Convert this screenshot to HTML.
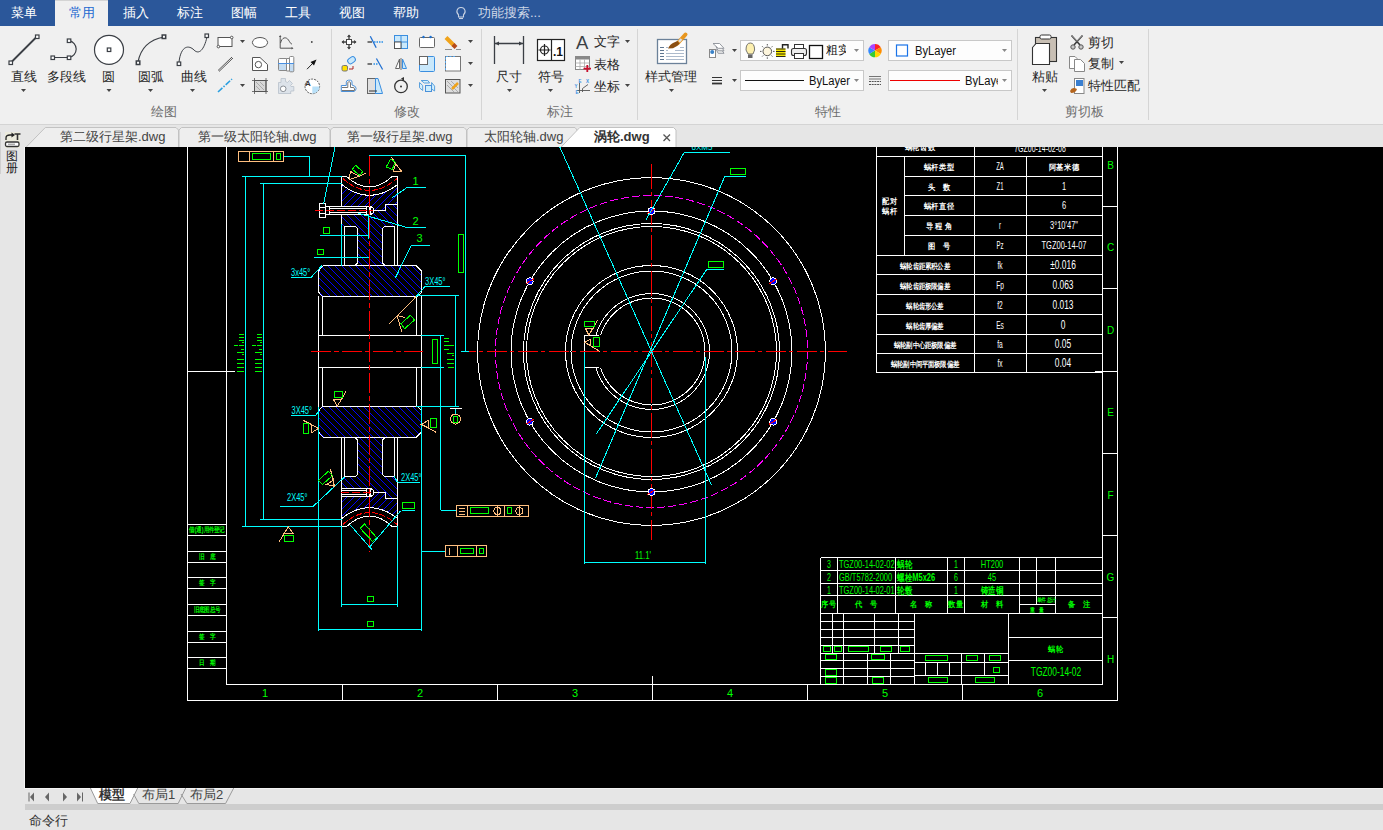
<!DOCTYPE html>
<html><head><meta charset="utf-8">
<style>
*{margin:0;padding:0;box-sizing:border-box}
html,body{width:1383px;height:830px;overflow:hidden;background:#f0f0f0;font-family:"Liberation Sans",sans-serif;position:relative}
.a{position:absolute;white-space:nowrap;line-height:1}
#menubar{position:absolute;left:0;top:0;width:1383px;height:26px;background:#2b579a}
.mt{position:absolute;top:4.5px;font-size:13px;color:#fff;line-height:16px}
#acttab{position:absolute;left:55px;top:0;width:53px;height:26px;background:#f0f0f0;border-top:1px solid #d4d4d4}
#ribbon{position:absolute;left:0;top:26px;width:1383px;height:98px;background:#f0f0f0}
.rt{position:absolute;font-size:13px;color:#262626;line-height:16px}
.gl{position:absolute;top:104px;font-size:13px;color:#6d6d6d;line-height:16px}
.sep{position:absolute;top:29px;width:1px;height:91px;background:#d5d5d5}
#tabbar{position:absolute;left:0;top:124px;width:1383px;height:23px;background:#e6e6e6}
.dt{position:absolute;top:129px;font-size:13px;color:#444;line-height:16px}
#side{position:absolute;left:0;top:147px;width:25px;height:663px;background:#e6e6e6}
#canvas{position:absolute;left:25px;top:147px;width:1358px;height:641px;background:#000;overflow:hidden}
#laybar{position:absolute;left:24px;top:788px;width:1359px;height:16px;background:#e6e6e6;border-top:1px solid #f2f2f2}
#graybar{position:absolute;left:25px;top:804px;width:1358px;height:6px;background:#cdcdcd}
#cmd{position:absolute;left:0;top:810px;width:1383px;height:20px;background:#e6e6e6}
</style></head><body>
<div id="menubar"></div>
<div id="acttab"></div>
<div class="mt" style="left:11px">菜单</div>
<div class="mt" style="left:69px;color:#2369d0">常用</div>
<div class="mt" style="left:123px">插入</div>
<div class="mt" style="left:177px">标注</div>
<div class="mt" style="left:231px">图幅</div>
<div class="mt" style="left:285px">工具</div>
<div class="mt" style="left:339px">视图</div>
<div class="mt" style="left:393px">帮助</div>
<div class="mt" style="left:478px;color:#d0d9e8">功能搜索...</div>

<div id="ribbon"></div>
<div class="sep" style="left:331px"></div>
<div class="sep" style="left:481px"></div>
<div class="sep" style="left:637px"></div>
<div class="sep" style="left:1017px"></div>
<div class="sep" style="left:1148px"></div>
<div class="rt" style="left:11px;top:69px">直线</div>
<div class="rt" style="left:47px;top:69px">多段线</div>
<div class="rt" style="left:102px;top:69px">圆</div>
<div class="rt" style="left:138px;top:69px">圆弧</div>
<div class="rt" style="left:181px;top:69px">曲线</div>
<div class="gl" style="left:151px">绘图</div>
<div class="gl" style="left:394px">修改</div>
<div class="rt" style="left:496px;top:69px">尺寸</div>
<div class="rt" style="left:538px;top:69px">符号</div>
<div class="rt" style="left:594px;top:34px">文字</div>
<div class="rt" style="left:594px;top:57px">表格</div>
<div class="rt" style="left:594px;top:79px">坐标</div>
<div class="gl" style="left:547px">标注</div>
<div class="rt" style="left:645px;top:69px">样式管理</div>
<div class="gl" style="left:815px">特性</div>
<div class="rt" style="left:1032px;top:69px">粘贴</div>
<div class="rt" style="left:1088px;top:35px">剪切</div>
<div class="rt" style="left:1088px;top:56px">复制</div>
<div class="rt" style="left:1088px;top:78px">特性匹配</div>
<div class="gl" style="left:1065px">剪切板</div>

<svg class="a" style="left:0;top:0" width="1383" height="124" viewBox="0 0 1383 124">
<g fill="#444">
<path d="M21 89h5l-2.5 3z"/><path d="M106.5 89h5l-2.5 3z"/><path d="M148 89h5l-2.5 3z"/><path d="M190 89h5l-2.5 3z"/>
<path d="M240 40h5l-2.5 3z"/><path d="M240 84h5l-2.5 3z"/>
<path d="M468 40h5l-2.5 3z"/><path d="M468 62h5l-2.5 3z"/><path d="M468 84h5l-2.5 3z"/>
<path d="M507 89h5l-2.5 3z"/><path d="M548 89h5l-2.5 3z"/><path d="M625 40h5l-2.5 3z"/><path d="M625 84h5l-2.5 3z"/>
<path d="M669 89h5l-2.5 3z"/><path d="M732 49h5l-2.5 3z"/><path d="M732 79h5l-2.5 3z"/>
<path d="M1042 89h5l-2.5 3z"/><path d="M1119 61h5l-2.5 3z"/>
</g>
<!-- draw group big icons -->
<g stroke="#3b3f45" fill="#fff">
<line x1="11" y1="62.5" x2="37" y2="36.5" stroke-width="1.8"/>
<rect x="9" y="61" width="3.5" height="3.5" stroke-width="1.2"/><rect x="35.5" y="35" width="3.5" height="3.5" stroke-width="1.2"/>
<path d="M54.5 57.5H69A8.5 8.5 0 0 0 69 40.7" fill="none" stroke-width="1.2"/>
<rect x="51" y="56" width="3.5" height="3.5" stroke-width="1.2"/><rect x="67.3" y="56" width="3.5" height="3.5" stroke-width="1.2"/><rect x="67.3" y="39" width="3.5" height="3.5" stroke-width="1.2"/>
<circle cx="109" cy="49.8" r="14.5" stroke-width="1.2"/>
<rect x="107.3" y="48" width="3.5" height="3.5" stroke-width="1.2"/>
<path d="M138 62Q142 41 164 37" fill="none" stroke-width="1.2"/>
<rect x="136.3" y="61" width="3.5" height="3.5" stroke-width="1.5"/><rect x="162.2" y="35" width="3.5" height="3.5" stroke-width="1.5"/>
<path d="M179 62C181 45 189 45 194 50C199 55 204 50 207 37" fill="none" stroke-width="1"/>
<rect x="177.2" y="62" width="3.5" height="3.5" stroke-width="1.2"/><rect x="205" y="34" width="3.5" height="3.5" stroke-width="1.2"/>
</g>
<!-- small draw icons -->
<g stroke="#555" fill="#fff" stroke-width="1">
<rect x="218" y="37.5" width="14" height="9"/>
<circle cx="231.7" cy="37.5" r="1.3"/><circle cx="218.4" cy="46.6" r="1.3"/>
<ellipse cx="260" cy="42.5" rx="7.6" ry="5"/>
<path d="M218 70.5L232 57M219 71.5L233 58" fill="none" stroke="#555" stroke-width="1"/>
<path d="M252.5 57.5H260L267.5 64.5V70.5H252.5Z"/><circle cx="258.4" cy="64.6" r="3.2"/>
<path d="M280.2 36V48.2H292.5M280.5 43C282 37 286 36.5 288.5 40C290 42.5 291 44 292 44.2" fill="none" stroke="#555"/><path d="M280.2 35l-1.3 2h2.6zM293.5 48.2l-2-1.3v2.6z" fill="#555" stroke="none"/>
<circle cx="311.8" cy="42" r="0.9" fill="#444" stroke="none"/>
</g>
<path d="M218 92L232 79" stroke="#2a9fe0" stroke-width="1.6" stroke-dasharray="6 1.5 1.5 1.5"/>
<rect x="254.5" y="80.5" width="11.5" height="11" fill="#d8d8d8" stroke="#555"/>
<path d="M256 82L264 90M256 86L260 90M260 82L264 86" stroke="#aaa" stroke-width="1"/>
<path d="M252 80.5H268M252 91.5H268M254.5 78V94M266 78V94" stroke="#555" stroke-width="0.8"/>
<!-- shaft -->
<path d="M278.5 63.5V59.5Q278.5 58.5 279.5 58.5H286.5V63.5Z" fill="#fff" stroke="#888"/>
<path d="M278.5 63.5V69.5Q278.5 70.5 279.5 70.5H286.5V63.5Z" fill="#c4dcf2" stroke="#888"/>
<path d="M286.5 58.5H289.5V71H286.5Z" fill="#fff" stroke="#888"/>
<path d="M289.5 63.5V57.5Q289.5 56.5 290.5 56.5H292.8Q293.8 56.5 293.8 57.5V63.5Z" fill="#fff" stroke="#888"/>
<path d="M286.5 63.5H293.8V70.8Q293.8 71.8 292.8 71.8H290.5Q289.5 71.8 289.5 70.8V63.5Z" fill="#c4dcf2" stroke="#888"/>
<line x1="278" y1="63.5" x2="294" y2="63.5" stroke="#4a90e2"/>
<!-- arrow -->
<path d="M307 69.2L313 63" stroke="#222" stroke-width="1"/><path d="M316.5 59.5L310.5 62L314 65.5Z" fill="#111"/>
<!-- gear -->
<path d="M278.5 82.5H281V78.5H285.5V81.5L287.5 82.5L289.5 80.5L292.5 83.5L290.5 85.5L291 86.5H293.8V91H291L290.5 92L291 93.5H278.5Z" fill="#dde3ea" stroke="#b8c0ca" stroke-width="0.8"/>
<circle cx="283.2" cy="88.8" r="2.8" fill="#fff" stroke="#8a8f96" stroke-width="1"/>
<!-- A circle -->
<circle cx="312.3" cy="86.4" r="7.3" fill="#fff" stroke="#333" stroke-width="0.8" stroke-dasharray="2 1"/>
<path d="M312.3 86.4H319.6A7.3 7.3 0 0 1 312.3 93.7Z" fill="#b8e0f8"/>
<text x="305" y="86" font-size="8" font-family="Liberation Sans" font-weight="bold" fill="#333">A</text>
<!-- modify group -->
<g stroke="#444" fill="#444">
<path d="M342 42H356M349 35V49" stroke-width="1.4"/>
<rect x="346.5" y="39.5" width="5" height="5" fill="#fff" stroke-width="1"/>
<path d="M341.5 42l2.5-2v4zM356.5 42l-2.5-2v4zM349 34.5l-2 2.5h4zM349 49.5l-2-2.5h4z" stroke="none"/>
</g>
<path d="M367.5 42H372" stroke="#777" stroke-width="2"/>
<path d="M370.3 36.3L376.2 47.7" stroke="#1f6fd1" stroke-width="1.3"/>
<path d="M374 42H383" stroke="#5aa7ea" stroke-width="1.8" stroke-dasharray="1.5 1"/>
<rect x="394.5" y="35.5" width="13" height="13" fill="#c9e8fb" stroke="#3a8ee0"/>
<path d="M401 35.5V48.5M394.5 42H407.5" stroke="#3a8ee0"/>
<rect x="394.5" y="42" width="6.5" height="6.5" fill="#fff" stroke="#555"/>
<rect x="419.5" y="37.5" width="15" height="10" fill="#fff" stroke="#666" rx="1"/>
<circle cx="423.5" cy="37" r="1.2" fill="#1a6fd1"/><circle cx="430.6" cy="37" r="1.2" fill="#1a6fd1"/>
<path d="M446 37.5L454 45.5" stroke="#f0a31a" stroke-width="4"/>
<path d="M453 44.5L456 47.5" stroke="#b44a1a" stroke-width="4"/>
<path d="M445 49.5H452M456 49.5H461" stroke="#777" stroke-width="0.8"/>
<!-- row2 modify -->
<rect x="342" y="65.5" width="5.5" height="5.5" fill="#ffe000" stroke="#777" rx="1.5"/>
<rect x="347.5" y="57.5" width="8" height="5.5" fill="#c9e8fb" stroke="#3a8ee0" rx="2.5" transform="rotate(-35 351.5 60.2)"/>
<path d="M349 69H353V66" stroke="#a22" fill="none"/>
<path d="M367.5 64H372" stroke="#777" stroke-width="2"/>
<path d="M373.5 64H378" stroke="#5aa7ea" stroke-width="1.8" stroke-dasharray="1.5 1"/>
<path d="M376.4 58.5L382.6 69.5" stroke="#1f6fd1" stroke-width="1.3"/>
<path d="M399.5 59L395.5 68.5H399.5Z" fill="#fff" stroke="#666"/>
<path d="M402.5 59L406.5 68.5H402.5Z" fill="#c9e8fb" stroke="#3a8ee0"/>
<path d="M401 58V70" stroke="#999" stroke-width="1.5"/>
<rect x="419.5" y="56.5" width="15" height="15" fill="#c9e8fb" stroke="#3a8ee0" rx="1"/>
<rect x="419.5" y="56.5" width="8" height="8" fill="#fff" stroke="#666"/>
<rect x="445.5" y="56.5" width="15" height="14.5" fill="#fff" stroke="#777"/>
<path d="M445.5 70V56.5H456" stroke="#5aa7ea" stroke-dasharray="2 1.5" fill="none"/>
<!-- row3 modify -->
<path d="M341.3 85.5H346.3V82.2Q346.5 80.2 348.5 80.2H350.5Q352 80.2 352 82V85L355.3 86.5Q356.8 88.5 355.5 90.3L354.3 91.5H341.3Z" fill="#fff" stroke="#4a90d9" stroke-width="1"/>
<path d="M342 87.5H347.8V82.5Q348 81.8 349 81.8Q350.5 81.8 350.5 82.5V87.5H353.8L354.5 89V90.5H342" fill="none" stroke="#777" stroke-width="1"/>
<rect x="367.5" y="78.5" width="8" height="15" fill="#e0e0e0" stroke="#666"/>
<path d="M375.5 78.5H378L382.5 93.5H375.5Z" fill="#c9e8fb" stroke="#3a8ee0"/>
<path d="M369 91H377" stroke="#333"/>
<circle cx="401" cy="86.4" r="6.3" fill="none" stroke="#333" stroke-width="1.3"/>
<circle cx="401" cy="86.4" r="1" fill="#333"/>
<path d="M401 78.5l3-1.5v4z" fill="#333"/>
<path d="M421.1 80.5H427.8L429.6 83H424.3Z" fill="#d4f0fd" stroke="#5aa0dc"/>
<path d="M419.5 82.5L422.7 85.5V90.5L419.5 87.8Z" fill="#d4f0fd" stroke="#5aa0dc"/>
<path d="M431.6 82.5L434.6 86.1V91L431.6 89Z" fill="#d4f0fd" stroke="#5aa0dc"/>
<rect x="425.5" y="85.5" width="6" height="6" fill="#cdeefe" stroke="#4a90d9"/>
<rect x="445.5" y="79.5" width="14.5" height="13.5" fill="#ddd" stroke="#555"/>
<path d="M447 81L458 92M447 85L454 92M451 81L458 88" stroke="#aaa"/>
<path d="M452 89L458 83" stroke="#f0a31a" stroke-width="2.5"/>
<!-- 标注 group -->
<path d="M494.5 36V64M523.5 36V64M495 43.5H523" stroke="#3b3f45" stroke-width="1.3" fill="none"/>
<path d="M495 43.5l4-2v4zM523 43.5l-4-2v4z" fill="#3b3f45"/>
<rect x="537.5" y="39.5" width="27" height="21" fill="#fff" stroke="#222" stroke-width="1.2"/>
<path d="M551.5 39.5V60.5" stroke="#222" stroke-width="1.2"/>
<circle cx="544.5" cy="50" r="4" fill="none" stroke="#222" stroke-width="1.2"/>
<path d="M538.5 50H550.5M544.5 44V56" stroke="#222" stroke-width="1.2"/>
<text x="553" y="55.5" font-size="12" font-weight="bold" font-family="Liberation Sans" fill="#111">.1</text>
<text x="576" y="48.6" font-size="18.5" font-family="Liberation Sans" fill="#3a3f45">A</text>
<rect x="575.5" y="56.5" width="14" height="13" fill="#fff" stroke="#888"/>
<rect x="575.5" y="56.5" width="14" height="3" fill="#888"/>
<path d="M575.5 63H589.5M575.5 66.5H589.5M580 59.5V69.5M584.5 59.5V69.5" stroke="#aaa" stroke-width="0.8"/>
<path d="M583.5 68.6H591M587.3 65V72" stroke="#c8102e" stroke-width="1.8"/>
<path d="M579.5 83V93M577 90.5H590M582.5 88.5L588 84.5M582.5 88.5V92" stroke="#555" fill="none" stroke-width="0.9"/>
<text x="578.5" y="83" font-size="4.5" fill="#3a8ee0" font-family="Liberation Sans" font-weight="bold">E</text>
<text x="586" y="83" font-size="4.5" fill="#3a8ee0" font-family="Liberation Sans" font-weight="bold">X</text>
<text x="574.5" y="88" font-size="4.5" fill="#3a8ee0" font-family="Liberation Sans" font-weight="bold">Y</text>
<text x="575.5" y="93.5" font-size="4.5" fill="#3a8ee0" font-family="Liberation Sans" font-weight="bold">E</text>
<!-- style manager icon -->
<rect x="657.5" y="39.5" width="29" height="24" fill="#fff" stroke="#6b8199" stroke-width="1.3"/>
<path d="M660 47.5H664M660 50.5H664M660 53.5H664M660 56.5H664M660 59.5H664" stroke="#5f7690" stroke-width="1.1"/>
<path d="M666 53.5H684M666 56.5H684M666 59.5H684M675 50.5H684M680 47.5H684M666 47.5H668M666 50.5H668" stroke="#a3b2c6" stroke-width="0.9"/>
<path d="M677.5 43.5L685.5 34.5" stroke="#e8961e" stroke-width="4" stroke-linecap="round"/>
<path d="M679 41.8L681.5 39" stroke="#e0e0e0" stroke-width="2.4"/>
<path d="M668 48.5Q670 44 674 42.5L677.5 41L679.5 43.5Q677 47 673 48.2Z" fill="#8b4f12"/>
<!-- layer icon -->
<path d="M713 43.5H719.6L724 48.3H718.2Z" fill="#fff" stroke="#8a8f96" stroke-width="0.9"/>
<path d="M716 46.5L718.2 50.8H724L722.5 48.5M716 49L718.2 53.3H724L722.5 51" fill="none" stroke="#8a8f96" stroke-width="0.9"/>
<rect x="709.5" y="49.5" width="6" height="8" fill="#fff" stroke="#888"/>
<circle cx="712.2" cy="52" r="2" fill="#3a82c8"/>
<path d="M712 77.5H722M712 80.5H722" stroke="#333" stroke-width="1"/><path d="M712 83.5H722" stroke="#333" stroke-width="1.8"/>
<!-- combos -->
<rect x="740.5" y="40.5" width="123" height="20" fill="#fdfdfd" stroke="#c8c8c8"/>
<rect x="740.5" y="70.5" width="123" height="20" fill="#fdfdfd" stroke="#c8c8c8"/>
<rect x="888.5" y="40.5" width="123" height="20" fill="#fdfdfd" stroke="#c8c8c8"/>
<rect x="888.5" y="70.5" width="123" height="20" fill="#fdfdfd" stroke="#c8c8c8"/>
<g fill="#888"><path d="M854 49h5l-2.5 3z"/><path d="M854 79h5l-2.5 3z"/><path d="M1002 49h5l-2.5 3z"/><path d="M1002 79h5l-2.5 3z"/></g>
<path d="M746 50Q746 43 750.3 43Q754.6 43 754.6 50L753 54H748Z" fill="#fdf0b0" stroke="#555" stroke-width="0.8"/>
<rect x="748" y="54.5" width="4.5" height="3.5" fill="#666"/>
<circle cx="767.3" cy="51.4" r="4.3" fill="#fdf5dc" stroke="#444" stroke-width="0.9"/>
<path d="M767.3 44V45.5M767.3 57.3V58.8M760 51.4H761.5M773 51.4H774.6M762.2 46.3L763.2 47.3M771.4 55.5L772.4 56.5M772.4 46.3L771.4 47.3M763.2 55.5L762.2 56.5" stroke="#444" stroke-width="0.9"/>
<rect x="776" y="48.5" width="9.5" height="8" fill="#f5e600"/>
<path d="M776 49H785.5M776 51.5H785.5M776 54H785.5M776 56.5H785.5" stroke="#111" stroke-width="0.9"/>
<path d="M782.5 48.5V44.8H788V48.5" fill="none" stroke="#222" stroke-width="1.4"/>
<rect x="791.5" y="48.5" width="15" height="7" rx="2" fill="#eee" stroke="#333" stroke-width="1.1"/>
<rect x="794.5" y="44.5" width="9" height="4" fill="#fff" stroke="#333"/>
<rect x="794.5" y="53.5" width="9" height="5" fill="#fff" stroke="#333"/>
<rect x="809.5" y="45.5" width="13" height="13" fill="#fff" stroke="#111" stroke-width="1.3"/>
<path d="M745 80.5H804" stroke="#111" stroke-width="1"/>
<path d="M890 80.5H960" stroke="#e00" stroke-width="1"/>
<rect x="896.5" y="45" width="11" height="11" fill="#fff" stroke="#1a73e8" stroke-width="1.2"/>
<g transform="translate(875 50.6)">
<path d="M0 0L0 -6.7A6.7 6.7 0 0 1 5.8 -3.35Z" fill="#f22"/>
<path d="M0 0L5.8 -3.35A6.7 6.7 0 0 1 5.8 3.35Z" fill="#ff8c00"/>
<path d="M0 0L5.8 3.35A6.7 6.7 0 0 1 0 6.7Z" fill="#ffd800"/>
<path d="M0 0L0 6.7A6.7 6.7 0 0 1 -5.8 3.35Z" fill="#3c3"/>
<path d="M0 0L-5.8 3.35A6.7 6.7 0 0 1 -5.8 -3.35Z" fill="#38f"/>
<path d="M0 0L-5.8 -3.35A6.7 6.7 0 0 1 0 -6.7Z" fill="#a4f"/>
</g>
<path d="M869 76.5H881M869 79H881" stroke="#555" stroke-width="0.8"/><path d="M869 81.5H881M869 84.5H881" stroke="#555" stroke-width="1" stroke-dasharray="2 0.7"/>
<!-- clipboard -->
<rect x="1035.5" y="37.5" width="21" height="24" fill="#c8bfb4" stroke="#333" stroke-width="1.1"/>
<rect x="1040" y="35" width="11" height="4" rx="1.5" fill="#fff" stroke="#333"/>
<path d="M1032.5 47.5L1036 43.5H1049.5V64.5H1032.5Z" fill="#fff" stroke="#333" stroke-width="1.1"/>
<path d="M1071.5 35.5L1080 45M1082.5 35.5L1074 45" stroke="#3a3a3a" stroke-width="1.6"/>
<path d="M1071.5 35.5L1077 41.5M1082.5 35.5L1077 41.5" stroke="#9a9a9a" stroke-width="0.8"/>
<circle cx="1073" cy="47" r="2.2" fill="#c8c8c8" stroke="#555" stroke-width="1"/><circle cx="1081" cy="47" r="2.2" fill="#c8c8c8" stroke="#555" stroke-width="1"/>
<path d="M1069.5 56.5H1075L1077 58.5V68.5H1069.5Z" fill="#fff" stroke="#888"/>
<path d="M1074.5 59.5H1080.5L1084.5 63.5V71.5H1074.5Z" fill="#fff" stroke="#888"/>
<rect x="1074.5" y="78.5" width="9.5" height="15" fill="#fff" stroke="#888"/>
<rect x="1076" y="80" width="7" height="6" fill="#3a7fd0"/>
<path d="M1070 91Q1072 86 1077 89Q1076 93 1071 93Z" fill="#b5651d"/>
</svg>


<div id="side"></div>
<div class="a" style="left:24px;top:146px;width:1px;height:643px;background:#f4f4f4"></div>
<div id="canvas"><svg style="position:absolute;left:0;top:0" width="1358" height="641" viewBox="25 147 1358 641" font-family="Liberation Sans, sans-serif" shape-rendering="crispEdges">
<defs><pattern id="hat" patternUnits="userSpaceOnUse" width="4.3" height="4.3" patternTransform="rotate(-45)"><line x1="0" y1="0" x2="0" y2="4.3" stroke="#0000ff" stroke-width="1"/></pattern></defs>
<g stroke-width="1" shape-rendering="crispEdges">
<line x1="187.5" y1="147" x2="187.5" y2="700.5" stroke="#ffffff" />
<line x1="226.5" y1="147" x2="226.5" y2="684.5" stroke="#ffffff" />
<line x1="187" y1="700.5" x2="1117.5" y2="700.5" stroke="#ffffff" />
<line x1="226.5" y1="684.5" x2="1102.5" y2="684.5" stroke="#ffffff" />
<line x1="1117.5" y1="147" x2="1117.5" y2="700.5" stroke="#ffffff" />
<line x1="1102.5" y1="147" x2="1102.5" y2="684.5" stroke="#ffffff" />
<line x1="342.5" y1="684.5" x2="342.5" y2="700.5" stroke="#ffffff" />
<line x1="497.5" y1="684.5" x2="497.5" y2="700.5" stroke="#ffffff" />
<line x1="652.5" y1="684.5" x2="652.5" y2="700.5" stroke="#ffffff" />
<line x1="807.5" y1="684.5" x2="807.5" y2="700.5" stroke="#ffffff" />
<line x1="962.5" y1="684.5" x2="962.5" y2="700.5" stroke="#ffffff" />
<line x1="652.5" y1="676" x2="652.5" y2="684.5" stroke="#ffffff" />
<text x="265" y="696.5" fill="#00ff00" font-size="11" text-anchor="middle" >1</text>
<text x="420" y="696.5" fill="#00ff00" font-size="11" text-anchor="middle" >2</text>
<text x="575" y="696.5" fill="#00ff00" font-size="11" text-anchor="middle" >3</text>
<text x="730" y="696.5" fill="#00ff00" font-size="11" text-anchor="middle" >4</text>
<text x="885" y="696.5" fill="#00ff00" font-size="11" text-anchor="middle" >5</text>
<text x="1040" y="696.5" fill="#00ff00" font-size="11" text-anchor="middle" >6</text>
<line x1="1102.5" y1="206.5" x2="1117.5" y2="206.5" stroke="#ffffff" />
<line x1="1102.5" y1="288.5" x2="1117.5" y2="288.5" stroke="#ffffff" />
<line x1="1102.5" y1="371.5" x2="1117.5" y2="371.5" stroke="#ffffff" />
<line x1="1102.5" y1="453.5" x2="1117.5" y2="453.5" stroke="#ffffff" />
<line x1="1102.5" y1="535.5" x2="1117.5" y2="535.5" stroke="#ffffff" />
<line x1="1102.5" y1="617.5" x2="1117.5" y2="617.5" stroke="#ffffff" />
<line x1="1095" y1="371.5" x2="1102.5" y2="371.5" stroke="#ffffff" />
<text x="1110.5" y="168.5" fill="#00ff00" font-size="10" text-anchor="middle" >B</text>
<text x="1110.5" y="250.5" fill="#00ff00" font-size="10" text-anchor="middle" >C</text>
<text x="1110.5" y="333.5" fill="#00ff00" font-size="10" text-anchor="middle" >D</text>
<text x="1110.5" y="416.0" fill="#00ff00" font-size="10" text-anchor="middle" >E</text>
<text x="1110.5" y="498.5" fill="#00ff00" font-size="10" text-anchor="middle" >F</text>
<text x="1110.5" y="580.5" fill="#00ff00" font-size="10" text-anchor="middle" >G</text>
<text x="1110.5" y="663.0" fill="#00ff00" font-size="10" text-anchor="middle" >H</text>
<line x1="187.5" y1="524.5" x2="226.5" y2="524.5" stroke="#ffffff" />
<line x1="187.5" y1="535.5" x2="226.5" y2="535.5" stroke="#ffffff" />
<line x1="187.5" y1="551.5" x2="226.5" y2="551.5" stroke="#ffffff" />
<line x1="187.5" y1="562.5" x2="226.5" y2="562.5" stroke="#ffffff" />
<line x1="187.5" y1="577.5" x2="226.5" y2="577.5" stroke="#ffffff" />
<line x1="187.5" y1="588.5" x2="226.5" y2="588.5" stroke="#ffffff" />
<line x1="187.5" y1="604.5" x2="226.5" y2="604.5" stroke="#ffffff" />
<line x1="187.5" y1="615.5" x2="226.5" y2="615.5" stroke="#ffffff" />
<line x1="187.5" y1="631.5" x2="226.5" y2="631.5" stroke="#ffffff" />
<line x1="187.5" y1="642.5" x2="226.5" y2="642.5" stroke="#ffffff" />
<line x1="187.5" y1="657.5" x2="226.5" y2="657.5" stroke="#ffffff" />
<line x1="187.5" y1="668.5" x2="226.5" y2="668.5" stroke="#ffffff" />
<line x1="187.5" y1="371.5" x2="235" y2="371.5" stroke="#ffffff" />
<line x1="876.5" y1="147" x2="876.5" y2="372.5" stroke="#ffffff" />
<line x1="974.5" y1="147" x2="974.5" y2="372.5" stroke="#ffffff" />
<line x1="1026.5" y1="156.5" x2="1026.5" y2="372.5" stroke="#ffffff" />
<line x1="904.5" y1="156.5" x2="904.5" y2="255.5" stroke="#ffffff" />
<line x1="876.5" y1="156.5" x2="1102.5" y2="156.5" stroke="#ffffff" />
<line x1="904.5" y1="176.5" x2="1102.5" y2="176.5" stroke="#ffffff" />
<line x1="904.5" y1="195.5" x2="1102.5" y2="195.5" stroke="#ffffff" />
<line x1="904.5" y1="215.5" x2="1102.5" y2="215.5" stroke="#ffffff" />
<line x1="904.5" y1="235.5" x2="1102.5" y2="235.5" stroke="#ffffff" />
<line x1="876.5" y1="255.5" x2="1102.5" y2="255.5" stroke="#ffffff" />
<line x1="876.5" y1="274.5" x2="1102.5" y2="274.5" stroke="#ffffff" />
<line x1="876.5" y1="294.5" x2="1102.5" y2="294.5" stroke="#ffffff" />
<line x1="876.5" y1="314.5" x2="1102.5" y2="314.5" stroke="#ffffff" />
<line x1="876.5" y1="334.5" x2="1102.5" y2="334.5" stroke="#ffffff" />
<line x1="876.5" y1="353.5" x2="1102.5" y2="353.5" stroke="#ffffff" />
<line x1="876.5" y1="372.5" x2="1102.5" y2="372.5" stroke="#ffffff" />
</g>
<text x="0" y="0" transform="translate(1040 152) scale(0.7 1)" fill="#ffffff" font-size="10" text-anchor="middle">7GZ00-14-02-08</text>
<text x="0" y="0" transform="translate(920 150) scale(0.9 1)" fill="#ffffff" font-size="8" text-anchor="middle" font-weight="bold">蜗轮齿数</text>
<text x="0" y="0" transform="translate(939 170.0) scale(0.9 1)" fill="#ffffff" font-size="8" text-anchor="middle" font-weight="bold">蜗杆类型</text>
<text x="0" y="0" transform="translate(1000 170.0) scale(0.6 1)" fill="#ffffff" font-size="10" text-anchor="middle">ZA</text>
<text x="0" y="0" transform="translate(1064 170.0) scale(0.9 1)" fill="#ffffff" font-size="8" text-anchor="middle" font-weight="bold">阿基米德</text>
<text x="0" y="0" transform="translate(939 189.5) scale(0.9 1)" fill="#ffffff" font-size="8" text-anchor="middle" font-weight="bold">头　数</text>
<text x="0" y="0" transform="translate(1000 189.5) scale(0.6 1)" fill="#ffffff" font-size="10" text-anchor="middle">Z1</text>
<text x="0" y="0" transform="translate(1064 189.5) scale(0.75 1)" fill="#ffffff" font-size="10" text-anchor="middle">1</text>
<text x="0" y="0" transform="translate(939 209.0) scale(0.9 1)" fill="#ffffff" font-size="8" text-anchor="middle" font-weight="bold">蜗杆直径</text>
<text x="0" y="0" transform="translate(1000 209.0) scale(0.6 1)" fill="#ffffff" font-size="10" text-anchor="middle"></text>
<text x="0" y="0" transform="translate(1064 209.0) scale(0.75 1)" fill="#ffffff" font-size="10" text-anchor="middle">6</text>
<text x="0" y="0" transform="translate(939 229.0) scale(0.9 1)" fill="#ffffff" font-size="8" text-anchor="middle" font-weight="bold">导 程 角</text>
<text x="0" y="0" transform="translate(1000 229.0) scale(0.6 1)" fill="#ffffff" font-size="10" text-anchor="middle">r</text>
<text x="0" y="0" transform="translate(1064 229.0) scale(0.75 1)" fill="#ffffff" font-size="10" text-anchor="middle">3°10'47"</text>
<text x="0" y="0" transform="translate(939 249.0) scale(0.9 1)" fill="#ffffff" font-size="8" text-anchor="middle" font-weight="bold">图　号</text>
<text x="0" y="0" transform="translate(1000 249.0) scale(0.6 1)" fill="#ffffff" font-size="10" text-anchor="middle">Pz</text>
<text x="0" y="0" transform="translate(1064 249.0) scale(0.75 1)" fill="#ffffff" font-size="10" text-anchor="middle">TGZ00-14-07</text>
<text x="0" y="0" transform="translate(890 204) scale(0.9 1)" fill="#ffffff" font-size="8" text-anchor="middle" font-weight="bold">配对</text>
<text x="0" y="0" transform="translate(890 214) scale(0.9 1)" fill="#ffffff" font-size="8" text-anchor="middle" font-weight="bold">蜗杆</text>
<text x="0" y="0" transform="translate(925 269.0) scale(0.8 1)" fill="#ffffff" font-size="8" text-anchor="middle" font-weight="bold">蜗轮齿距累积公差</text>
<text x="0" y="0" transform="translate(1000 269.0) scale(0.6 1)" fill="#ffffff" font-size="11" text-anchor="middle">fk</text>
<text x="0" y="0" transform="translate(1063 269.0) scale(0.7 1)" fill="#ffffff" font-size="12" text-anchor="middle">±0.016</text>
<text x="0" y="0" transform="translate(925 288.5) scale(0.8 1)" fill="#ffffff" font-size="8" text-anchor="middle" font-weight="bold">蜗轮齿距极限偏差</text>
<text x="0" y="0" transform="translate(1000 288.5) scale(0.6 1)" fill="#ffffff" font-size="11" text-anchor="middle">Fp</text>
<text x="0" y="0" transform="translate(1063 288.5) scale(0.7 1)" fill="#ffffff" font-size="12" text-anchor="middle">0.063</text>
<text x="0" y="0" transform="translate(925 308.5) scale(0.8 1)" fill="#ffffff" font-size="8" text-anchor="middle" font-weight="bold">蜗轮齿形公差</text>
<text x="0" y="0" transform="translate(1000 308.5) scale(0.6 1)" fill="#ffffff" font-size="11" text-anchor="middle">f2</text>
<text x="0" y="0" transform="translate(1063 308.5) scale(0.7 1)" fill="#ffffff" font-size="12" text-anchor="middle">0.013</text>
<text x="0" y="0" transform="translate(925 328.5) scale(0.8 1)" fill="#ffffff" font-size="8" text-anchor="middle" font-weight="bold">蜗轮齿厚偏差</text>
<text x="0" y="0" transform="translate(1000 328.5) scale(0.6 1)" fill="#ffffff" font-size="11" text-anchor="middle">Es</text>
<text x="0" y="0" transform="translate(1063 328.5) scale(0.7 1)" fill="#ffffff" font-size="12" text-anchor="middle">0</text>
<text x="0" y="0" transform="translate(925 348.0) scale(0.8 1)" fill="#ffffff" font-size="8" text-anchor="middle" font-weight="bold">蜗轮副中心距极限偏差</text>
<text x="0" y="0" transform="translate(1000 348.0) scale(0.6 1)" fill="#ffffff" font-size="11" text-anchor="middle">fa</text>
<text x="0" y="0" transform="translate(1063 348.0) scale(0.7 1)" fill="#ffffff" font-size="12" text-anchor="middle">0.05</text>
<text x="0" y="0" transform="translate(925 367.0) scale(0.8 1)" fill="#ffffff" font-size="8" text-anchor="middle" font-weight="bold">蜗轮副中间平面极限偏差</text>
<text x="0" y="0" transform="translate(1000 367.0) scale(0.6 1)" fill="#ffffff" font-size="11" text-anchor="middle">fx</text>
<text x="0" y="0" transform="translate(1063 367.0) scale(0.7 1)" fill="#ffffff" font-size="12" text-anchor="middle">0.04</text>
<g stroke-width="1" shape-rendering="crispEdges">
<line x1="820.5" y1="557.5" x2="1102.5" y2="557.5" stroke="#ffffff" />
<line x1="820.5" y1="570.5" x2="1102.5" y2="570.5" stroke="#ffffff" />
<line x1="820.5" y1="583.5" x2="1102.5" y2="583.5" stroke="#ffffff" />
<line x1="820.5" y1="595.5" x2="1102.5" y2="595.5" stroke="#ffffff" />
<line x1="820.5" y1="613.5" x2="1102.5" y2="613.5" stroke="#ffffff" />
<line x1="820.5" y1="557.5" x2="820.5" y2="613.5" stroke="#ffffff" />
<line x1="837.5" y1="557.5" x2="837.5" y2="613.5" stroke="#ffffff" />
<line x1="895.5" y1="557.5" x2="895.5" y2="613.5" stroke="#ffffff" />
<line x1="947.5" y1="557.5" x2="947.5" y2="613.5" stroke="#ffffff" />
<line x1="964.5" y1="557.5" x2="964.5" y2="613.5" stroke="#ffffff" />
<line x1="1019.5" y1="557.5" x2="1019.5" y2="613.5" stroke="#ffffff" />
<line x1="1055.5" y1="557.5" x2="1055.5" y2="613.5" stroke="#ffffff" />
<line x1="1102.5" y1="557.5" x2="1102.5" y2="613.5" stroke="#ffffff" />
<line x1="1036.5" y1="557.5" x2="1036.5" y2="604.5" stroke="#ffffff" />
<line x1="1019.5" y1="604.5" x2="1055.5" y2="604.5" stroke="#ffffff" />
<line x1="820.5" y1="613.5" x2="820.5" y2="684.5" stroke="#ffffff" />
<line x1="914.5" y1="613.5" x2="914.5" y2="684.5" stroke="#ffffff" />
<line x1="1008.5" y1="613.5" x2="1008.5" y2="684.5" stroke="#ffffff" />
<line x1="820.5" y1="621.5" x2="914.5" y2="621.5" stroke="#ffffff" />
<line x1="820.5" y1="629.5" x2="914.5" y2="629.5" stroke="#ffffff" />
<line x1="820.5" y1="637.5" x2="914.5" y2="637.5" stroke="#ffffff" />
<line x1="820.5" y1="645.5" x2="914.5" y2="645.5" stroke="#ffffff" />
<line x1="820.5" y1="653.5" x2="914.5" y2="653.5" stroke="#ffffff" />
<line x1="820.5" y1="660.5" x2="914.5" y2="660.5" stroke="#ffffff" />
<line x1="820.5" y1="668.5" x2="914.5" y2="668.5" stroke="#ffffff" />
<line x1="820.5" y1="676.5" x2="914.5" y2="676.5" stroke="#ffffff" />
<line x1="832.5" y1="613.5" x2="832.5" y2="653.5" stroke="#ffffff" />
<line x1="843.5" y1="613.5" x2="843.5" y2="653.5" stroke="#ffffff" />
<line x1="874.5" y1="613.5" x2="874.5" y2="653.5" stroke="#ffffff" />
<line x1="898.5" y1="613.5" x2="898.5" y2="653.5" stroke="#ffffff" />
<line x1="843.5" y1="653.5" x2="843.5" y2="684.5" stroke="#ffffff" />
<line x1="867.5" y1="653.5" x2="867.5" y2="684.5" stroke="#ffffff" />
<line x1="890.5" y1="653.5" x2="890.5" y2="684.5" stroke="#ffffff" />
<line x1="914.5" y1="653.5" x2="1008.5" y2="653.5" stroke="#ffffff" />
<line x1="914.5" y1="662.5" x2="1008.5" y2="662.5" stroke="#ffffff" />
<line x1="914.5" y1="675.5" x2="1008.5" y2="675.5" stroke="#ffffff" />
<line x1="961.5" y1="653.5" x2="961.5" y2="675.5" stroke="#ffffff" />
<line x1="984.5" y1="653.5" x2="984.5" y2="675.5" stroke="#ffffff" />
<line x1="925.5" y1="662.5" x2="925.5" y2="675.5" stroke="#ffffff" />
<line x1="937.5" y1="662.5" x2="937.5" y2="675.5" stroke="#ffffff" />
<line x1="949.5" y1="662.5" x2="949.5" y2="675.5" stroke="#ffffff" />
<line x1="961.5" y1="675.5" x2="961.5" y2="684.5" stroke="#ffffff" />
<line x1="1008.5" y1="637.5" x2="1102.5" y2="637.5" stroke="#ffffff" />
<line x1="1008.5" y1="660.5" x2="1102.5" y2="660.5" stroke="#ffffff" />
</g>
<text x="0" y="0" transform="translate(829 568.0) scale(0.7 1)" fill="#00ff00" font-size="10" text-anchor="middle">3</text>
<text x="0" y="0" transform="translate(839 568.0) scale(0.68 1)" fill="#00ff00" font-size="11">TGZ00-14-02-02</text>
<text x="0" y="0" transform="translate(897 568.0) scale(0.75 1)" fill="#00ff00" font-size="10" font-weight="bold">蜗轮</text>
<text x="0" y="0" transform="translate(956 568.0) scale(0.7 1)" fill="#00ff00" font-size="10" text-anchor="middle">1</text>
<text x="0" y="0" transform="translate(992 568.0) scale(0.75 1)" fill="#00ff00" font-size="10" text-anchor="middle">HT200</text>
<text x="0" y="0" transform="translate(829 581.0) scale(0.7 1)" fill="#00ff00" font-size="10" text-anchor="middle">2</text>
<text x="0" y="0" transform="translate(839 581.0) scale(0.68 1)" fill="#00ff00" font-size="11">GB/T5782-2000</text>
<text x="0" y="0" transform="translate(897 581.0) scale(0.75 1)" fill="#00ff00" font-size="10" font-weight="bold">螺栓M5x26</text>
<text x="0" y="0" transform="translate(956 581.0) scale(0.7 1)" fill="#00ff00" font-size="10" text-anchor="middle">6</text>
<text x="0" y="0" transform="translate(992 581.0) scale(0.75 1)" fill="#00ff00" font-size="10" text-anchor="middle">45</text>
<text x="0" y="0" transform="translate(829 594.0) scale(0.7 1)" fill="#00ff00" font-size="10" text-anchor="middle">1</text>
<text x="0" y="0" transform="translate(839 594.0) scale(0.68 1)" fill="#00ff00" font-size="11">TGZ00-14-02-01</text>
<text x="0" y="0" transform="translate(897 594.0) scale(0.75 1)" fill="#00ff00" font-size="10" font-weight="bold">轮毂</text>
<text x="0" y="0" transform="translate(956 594.0) scale(0.7 1)" fill="#00ff00" font-size="10" text-anchor="middle">1</text>
<text x="0" y="0" transform="translate(992 594.0) scale(0.75 1)" fill="#00ff00" font-size="10" text-anchor="middle" font-weight="bold">铸造铜</text>
<text x="0" y="0" transform="translate(829 607) scale(0.9 1)" fill="#00ff00" font-size="8" text-anchor="middle" font-weight="bold">序号</text>
<text x="0" y="0" transform="translate(866 607) scale(0.9 1)" fill="#00ff00" font-size="8" text-anchor="middle" font-weight="bold">代　号</text>
<text x="0" y="0" transform="translate(921 607) scale(0.9 1)" fill="#00ff00" font-size="8" text-anchor="middle" font-weight="bold">名　称</text>
<text x="0" y="0" transform="translate(956 607) scale(0.9 1)" fill="#00ff00" font-size="8" text-anchor="middle" font-weight="bold">数量</text>
<text x="0" y="0" transform="translate(992 607) scale(0.9 1)" fill="#00ff00" font-size="8" text-anchor="middle" font-weight="bold">材　料</text>
<text x="0" y="0" transform="translate(1079 607) scale(0.9 1)" fill="#00ff00" font-size="8" text-anchor="middle" font-weight="bold">备　注</text>
<text x="0" y="0" transform="translate(1046 602) scale(0.8 1)" fill="#00ff00" font-size="6" text-anchor="middle" font-weight="bold">单件 总计</text>
<text x="0" y="0" transform="translate(1037 612) scale(0.8 1)" fill="#00ff00" font-size="6" text-anchor="middle" font-weight="bold">重　量</text>
<text x="0" y="0" transform="translate(1056 652) scale(0.9 1)" fill="#00ff00" font-size="8" text-anchor="middle" font-weight="bold">蜗轮</text>
<text x="0" y="0" transform="translate(1056 676) scale(0.7 1)" fill="#00ff00" font-size="12" text-anchor="middle">TGZ00-14-02</text>
<g stroke-width="1" shape-rendering="crispEdges">
<rect x="823" y="646.5" width="7" height="5" stroke="#00ff00" fill="none" />
<rect x="834.5" y="646.5" width="7" height="5" stroke="#00ff00" fill="none" />
<rect x="848.5" y="646.5" width="20" height="5" stroke="#00ff00" fill="none" />
<rect x="880.5" y="646.5" width="11" height="5" stroke="#00ff00" fill="none" />
<rect x="900.5" y="646.5" width="9" height="5" stroke="#00ff00" fill="none" />
<rect x="825.5" y="654.5" width="11" height="5" stroke="#00ff00" fill="none" />
<rect x="871.5" y="654.5" width="13" height="5" stroke="#00ff00" fill="none" />
<rect x="825.5" y="669.5" width="11" height="6" stroke="#00ff00" fill="none" />
<rect x="825.5" y="677.5" width="11" height="6" stroke="#00ff00" fill="none" />
<rect x="872.5" y="677.5" width="11" height="6" stroke="#00ff00" fill="none" />
<rect x="925.5" y="655.5" width="22" height="5" stroke="#00ff00" fill="none" />
<rect x="966.5" y="655.5" width="11" height="5" stroke="#00ff00" fill="none" />
<rect x="989.5" y="655.5" width="11" height="5" stroke="#00ff00" fill="none" />
<rect x="993.5" y="667.5" width="6" height="5" stroke="#00ff00" fill="none" />
<rect x="928.5" y="677.5" width="19" height="5" stroke="#00ff00" fill="none" />
<rect x="975.5" y="677.5" width="19" height="5" stroke="#00ff00" fill="none" />
</g>
<text x="0" y="0" transform="translate(207 531.5) scale(0.8 1)" fill="#00ff00" font-size="7" text-anchor="middle" font-weight="bold">借(通)用件登记</text>
<text x="0" y="0" transform="translate(207 558.5) scale(0.8 1)" fill="#00ff00" font-size="7" text-anchor="middle" font-weight="bold">旧　底</text>
<text x="0" y="0" transform="translate(207 585) scale(0.8 1)" fill="#00ff00" font-size="7" text-anchor="middle" font-weight="bold">签　字</text>
<text x="0" y="0" transform="translate(207 611.5) scale(0.8 1)" fill="#00ff00" font-size="7" text-anchor="middle" font-weight="bold">旧底图总号</text>
<text x="0" y="0" transform="translate(207 638.5) scale(0.8 1)" fill="#00ff00" font-size="7" text-anchor="middle" font-weight="bold">签　字</text>
<text x="0" y="0" transform="translate(207 665) scale(0.8 1)" fill="#00ff00" font-size="7" text-anchor="middle" font-weight="bold">日　期</text>
<g stroke-width="1" shape-rendering="crispEdges">
</g>
<g fill="none" stroke-width="1">
<circle cx="651.5" cy="351.5" r="174" stroke="#ffffff"/>
<circle cx="651.5" cy="351.5" r="140.5" stroke="#ffffff"/>
<circle cx="651.5" cy="351.5" r="128" stroke="#ffffff"/>
<circle cx="651.5" cy="351.5" r="125" stroke="#ffffff"/>
<circle cx="651.5" cy="351.5" r="86" stroke="#ffffff"/>
<circle cx="651.5" cy="351.5" r="80.5" stroke="#ffffff"/>
<circle cx="651.5" cy="351.5" r="156" stroke="#ff00ff" stroke-dasharray="8 3"/>
<path d="M595.78 335.4 A58 58 0 1 1 595.78 367.6" stroke="#ffffff" fill="none" />
<path d="M600.48 335.4 A53.5 53.5 0 1 1 600.48 367.6" stroke="#ffffff" fill="none" />
<path d="M598.7 335.5 L584.5 335.5 L584.5 367.5 L598.7 367.5" stroke="#ffffff" fill="none" shape-rendering="crispEdges"/>
</g>
<g shape-rendering="crispEdges"><line x1="651.5" y1="164" x2="651.5" y2="540" stroke="#ff0000" stroke-dasharray="25 3 4 3.6"/>
<line x1="468" y1="351.5" x2="847" y2="351.5" stroke="#ff0000" stroke-dasharray="20 3.3 4 3.7" stroke-dashoffset="12.2"/></g>
<circle cx="651.5" cy="211.0" r="3.3" fill="#0000ff" stroke="#ffffff" stroke-width="1"/>
<line x1="647.5" y1="213.5" x2="655.5" y2="208.5" stroke="#ff0000" stroke-width="1"/>
<circle cx="529.8" cy="281.2" r="3.3" fill="#0000ff" stroke="#ffffff" stroke-width="1"/>
<line x1="525.8234307682864" y1="283.75" x2="533.8234307682864" y2="278.75" stroke="#ff0000" stroke-width="1"/>
<circle cx="529.8" cy="421.8" r="3.3" fill="#0000ff" stroke="#ffffff" stroke-width="1"/>
<line x1="525.8234307682864" y1="424.25" x2="533.8234307682864" y2="419.25" stroke="#ff0000" stroke-width="1"/>
<circle cx="651.5" cy="492.0" r="3.3" fill="#0000ff" stroke="#ffffff" stroke-width="1"/>
<line x1="647.5" y1="494.5" x2="655.5" y2="489.5" stroke="#ff0000" stroke-width="1"/>
<circle cx="773.2" cy="421.8" r="3.3" fill="#0000ff" stroke="#ffffff" stroke-width="1"/>
<line x1="769.1765692317135" y1="424.25000000000006" x2="777.1765692317135" y2="419.25000000000006" stroke="#ff0000" stroke-width="1"/>
<circle cx="773.2" cy="281.2" r="3.3" fill="#0000ff" stroke="#ffffff" stroke-width="1"/>
<line x1="769.1765692317136" y1="283.75" x2="777.1765692317136" y2="278.75" stroke="#ff0000" stroke-width="1"/>
<g stroke-width="1">
<line x1="559.8" y1="147" x2="711.5" y2="485" stroke="#00ffff" />
<line x1="724.9" y1="176.1" x2="595.5" y2="478" stroke="#00ffff" />
<line x1="724.9" y1="176.5" x2="745.6" y2="176.5" stroke="#00ffff" />
<line x1="706.7" y1="269.5" x2="596.5" y2="433.6" stroke="#00ffff" />
<line x1="706.7" y1="269.5" x2="723.6" y2="269.5" stroke="#00ffff" />
<path d="M645.9 220 L684.2 152.5 L729.5 152.5" stroke="#00ffff" fill="none" />
<rect x="730.5" y="168.5" width="15" height="6" stroke="#00ff00" fill="none" />
<rect x="708.5" y="261.5" width="15" height="6" stroke="#00ff00" fill="none" />
<text x="702" y="150" fill="#00ffff" font-size="8" text-anchor="middle" >6XM5</text>
<line x1="584.5" y1="351.5" x2="584.5" y2="564" stroke="#00ffff" shape-rendering="crispEdges"/>
<line x1="705.5" y1="357" x2="705.5" y2="564" stroke="#00ffff" shape-rendering="crispEdges"/>
<line x1="584.5" y1="562.5" x2="705.5" y2="562.5" stroke="#00ffff" shape-rendering="crispEdges"/>
</g>
<text x="0" y="0" transform="translate(643 559) scale(0.7 1)" fill="#00ff00" font-size="11" text-anchor="middle">11.1'</text>
<path d="M585.7 328.9 L592.9 328.9 L588.7 335 Z M588.7 335 L597.7 319.9" stroke="#ffbf7f" fill="none" />
<rect x="584.5" y="321.5" width="9.5" height="5" stroke="#00ff00" fill="none" />
<path d="M590.5 339.2 L584.5 342.2 L590.5 345.5 Z M584.5 342.2 L600.1 351.6" stroke="#ffbf7f" fill="none" />
<rect x="593.5" y="337.5" width="5.5" height="9" stroke="#00ff00" fill="none" />
<g shape-rendering="crispEdges">
</g>
<clipPath id="hclip"><path d="M341.7 184.5 Q369.4 206.3 397.8 184.5 L397.8 265.5 L416 265.5 L421.7 271 L421.7 292 L417.5 296.4 L322.5 296.4 L318.4 292 L318.4 271 L323.5 265.5 L341.7 265.5 Z M341.7 518.5 Q369.4 496.7 397.8 518.5 L397.8 437.5 L416 437.5 L421.7 432.0 L421.7 411.0 L417.5 406.6 L322.5 406.6 L318.4 411.0 L318.4 432.0 L323.5 437.5 L341.7 437.5 Z"/></clipPath>
<path d="M300.5 -279.50 L440.5 -139.50 M300.5 -272.50 L440.5 -132.50 M300.5 -265.50 L440.5 -125.50 M300.5 -258.50 L440.5 -118.50 M300.5 -251.50 L440.5 -111.50 M300.5 -244.50 L440.5 -104.50 M300.5 -237.50 L440.5 -97.50 M300.5 -230.50 L440.5 -90.50 M300.5 -223.50 L440.5 -83.50 M300.5 -216.50 L440.5 -76.50 M300.5 -209.50 L440.5 -69.50 M300.5 -202.50 L440.5 -62.50 M300.5 -195.50 L440.5 -55.50 M300.5 -188.50 L440.5 -48.50 M300.5 -181.50 L440.5 -41.50 M300.5 -174.50 L440.5 -34.50 M300.5 -167.50 L440.5 -27.50 M300.5 -160.50 L440.5 -20.50 M300.5 -153.50 L440.5 -13.50 M300.5 -146.50 L440.5 -6.50 M300.5 -139.50 L440.5 0.50 M300.5 -132.50 L440.5 7.50 M300.5 -125.50 L440.5 14.50 M300.5 -118.50 L440.5 21.50 M300.5 -111.50 L440.5 28.50 M300.5 -104.50 L440.5 35.50 M300.5 -97.50 L440.5 42.50 M300.5 -90.50 L440.5 49.50 M300.5 -83.50 L440.5 56.50 M300.5 -76.50 L440.5 63.50 M300.5 -69.50 L440.5 70.50 M300.5 -62.50 L440.5 77.50 M300.5 -55.50 L440.5 84.50 M300.5 -48.50 L440.5 91.50 M300.5 -41.50 L440.5 98.50 M300.5 -34.50 L440.5 105.50 M300.5 -27.50 L440.5 112.50 M300.5 -20.50 L440.5 119.50 M300.5 -13.50 L440.5 126.50 M300.5 -6.50 L440.5 133.50 M300.5 0.50 L440.5 140.50 M300.5 7.50 L440.5 147.50 M300.5 14.50 L440.5 154.50 M300.5 21.50 L440.5 161.50 M300.5 28.50 L440.5 168.50 M300.5 35.50 L440.5 175.50 M300.5 42.50 L440.5 182.50 M300.5 49.50 L440.5 189.50 M300.5 56.50 L440.5 196.50 M300.5 63.50 L440.5 203.50 M300.5 70.50 L440.5 210.50 M300.5 77.50 L440.5 217.50 M300.5 84.50 L440.5 224.50 M300.5 91.50 L440.5 231.50 M300.5 98.50 L440.5 238.50 M300.5 105.50 L440.5 245.50 M300.5 112.50 L440.5 252.50 M300.5 119.50 L440.5 259.50 M300.5 126.50 L440.5 266.50 M300.5 133.50 L440.5 273.50 M300.5 140.50 L440.5 280.50 M300.5 147.50 L440.5 287.50 M300.5 154.50 L440.5 294.50 M300.5 161.50 L440.5 301.50 M300.5 168.50 L440.5 308.50 M300.5 175.50 L440.5 315.50 M300.5 182.50 L440.5 322.50 M300.5 189.50 L440.5 329.50 M300.5 196.50 L440.5 336.50 M300.5 203.50 L440.5 343.50 M300.5 210.50 L440.5 350.50 M300.5 217.50 L440.5 357.50 M300.5 224.50 L440.5 364.50 M300.5 231.50 L440.5 371.50 M300.5 238.50 L440.5 378.50 M300.5 245.50 L440.5 385.50 M300.5 252.50 L440.5 392.50 M300.5 259.50 L440.5 399.50 M300.5 266.50 L440.5 406.50 M300.5 273.50 L440.5 413.50 M300.5 280.50 L440.5 420.50 M300.5 287.50 L440.5 427.50 M300.5 294.50 L440.5 434.50 M300.5 301.50 L440.5 441.50 M300.5 308.50 L440.5 448.50 M300.5 315.50 L440.5 455.50 M300.5 322.50 L440.5 462.50 M300.5 329.50 L440.5 469.50 M300.5 336.50 L440.5 476.50 M300.5 343.50 L440.5 483.50 M300.5 350.50 L440.5 490.50 M300.5 357.50 L440.5 497.50 M300.5 364.50 L440.5 504.50 M300.5 371.50 L440.5 511.50 M300.5 378.50 L440.5 518.50 M300.5 385.50 L440.5 525.50 M300.5 392.50 L440.5 532.50 M300.5 399.50 L440.5 539.50 M300.5 406.50 L440.5 546.50 M300.5 413.50 L440.5 553.50 M300.5 420.50 L440.5 560.50 M300.5 427.50 L440.5 567.50 M300.5 434.50 L440.5 574.50 M300.5 441.50 L440.5 581.50 M300.5 448.50 L440.5 588.50 M300.5 455.50 L440.5 595.50 M300.5 462.50 L440.5 602.50 M300.5 469.50 L440.5 609.50 M300.5 476.50 L440.5 616.50 M300.5 483.50 L440.5 623.50 M300.5 490.50 L440.5 630.50 M300.5 497.50 L440.5 637.50 M300.5 504.50 L440.5 644.50 M300.5 511.50 L440.5 651.50 M300.5 518.50 L440.5 658.50 M300.5 525.50 L440.5 665.50 M300.5 532.50 L440.5 672.50 M300.5 539.50 L440.5 679.50 M300.5 546.50 L440.5 686.50 M300.5 553.50 L440.5 693.50 M300.5 560.50 L440.5 700.50 M300.5 567.50 L440.5 707.50 M300.5 574.50 L440.5 714.50 M300.5 581.50 L440.5 721.50 M300.5 588.50 L440.5 728.50 M300.5 595.50 L440.5 735.50 M300.5 602.50 L440.5 742.50 M300.5 609.50 L440.5 749.50 M300.5 616.50 L440.5 756.50 M300.5 623.50 L440.5 763.50 M300.5 630.50 L440.5 770.50 M300.5 637.50 L440.5 777.50 M300.5 644.50 L440.5 784.50 M300.5 651.50 L440.5 791.50 M300.5 658.50 L440.5 798.50 M300.5 665.50 L440.5 805.50 M300.5 672.50 L440.5 812.50 M300.5 679.50 L440.5 819.50 M300.5 686.50 L440.5 826.50 M300.5 693.50 L440.5 833.50 M300.5 700.50 L440.5 840.50 M300.5 707.50 L440.5 847.50 M300.5 714.50 L440.5 854.50 M300.5 721.50 L440.5 861.50 M300.5 728.50 L440.5 868.50 M300.5 735.50 L440.5 875.50 M300.5 742.50 L440.5 882.50 M300.5 749.50 L440.5 889.50 M300.5 756.50 L440.5 896.50 M300.5 763.50 L440.5 903.50 M300.5 770.50 L440.5 910.50 M300.5 777.50 L440.5 917.50 M300.5 784.50 L440.5 924.50 M300.5 791.50 L440.5 931.50 M300.5 798.50 L440.5 938.50 M300.5 805.50 L440.5 945.50 M300.5 812.50 L440.5 952.50 M300.5 819.50 L440.5 959.50 M300.5 826.50 L440.5 966.50 M300.5 833.50 L440.5 973.50 M300.5 840.50 L440.5 980.50 M300.5 847.50 L440.5 987.50 M300.5 854.50 L440.5 994.50 M300.5 861.50 L440.5 1001.50 M300.5 868.50 L440.5 1008.50 M300.5 875.50 L440.5 1015.50 M300.5 882.50 L440.5 1022.50 M300.5 889.50 L440.5 1029.50 M300.5 896.50 L440.5 1036.50 M300.5 903.50 L440.5 1043.50 M300.5 910.50 L440.5 1050.50 M300.5 917.50 L440.5 1057.50 M300.5 924.50 L440.5 1064.50 M300.5 931.50 L440.5 1071.50 M300.5 938.50 L440.5 1078.50 M300.5 945.50 L440.5 1085.50 M300.5 952.50 L440.5 1092.50 M300.5 959.50 L440.5 1099.50 M300.5 966.50 L440.5 1106.50 M300.5 973.50 L440.5 1113.50" stroke="#0000ff" stroke-width="1" clip-path="url(#hclip)"/>
<clipPath id="rclip"><path d="M341.7 184.5 Q369.4 206.3 397.8 184.5 L397.8 204.2 L385.5 204.2 L385.5 210.3 L341.7 210.3 Z M341.7 518.5 Q369.4 496.7 397.8 518.5 L397.8 498.8 L385.5 498.8 L385.5 492.7 L341.7 492.7 Z"/></clipPath>
<path d="M341.7 184.5 Q369.4 206.3 397.8 184.5 L397.8 204.2 L385.5 204.2 L385.5 210.3 L341.7 210.3 Z M341.7 518.5 Q369.4 496.7 397.8 518.5 L397.8 498.8 L385.5 498.8 L385.5 492.7 L341.7 492.7 Z" fill="#000" stroke="none"/>
<path d="M300.5 200.50 L440.5 60.50 M300.5 207.50 L440.5 67.50 M300.5 214.50 L440.5 74.50 M300.5 221.50 L440.5 81.50 M300.5 228.50 L440.5 88.50 M300.5 235.50 L440.5 95.50 M300.5 242.50 L440.5 102.50 M300.5 249.50 L440.5 109.50 M300.5 256.50 L440.5 116.50 M300.5 263.50 L440.5 123.50 M300.5 270.50 L440.5 130.50 M300.5 277.50 L440.5 137.50 M300.5 284.50 L440.5 144.50 M300.5 291.50 L440.5 151.50 M300.5 298.50 L440.5 158.50 M300.5 305.50 L440.5 165.50 M300.5 312.50 L440.5 172.50 M300.5 319.50 L440.5 179.50 M300.5 326.50 L440.5 186.50 M300.5 333.50 L440.5 193.50 M300.5 340.50 L440.5 200.50 M300.5 347.50 L440.5 207.50 M300.5 354.50 L440.5 214.50 M300.5 361.50 L440.5 221.50 M300.5 368.50 L440.5 228.50 M300.5 375.50 L440.5 235.50 M300.5 382.50 L440.5 242.50 M300.5 389.50 L440.5 249.50 M300.5 396.50 L440.5 256.50 M300.5 403.50 L440.5 263.50 M300.5 410.50 L440.5 270.50 M300.5 417.50 L440.5 277.50 M300.5 424.50 L440.5 284.50 M300.5 431.50 L440.5 291.50 M300.5 438.50 L440.5 298.50 M300.5 445.50 L440.5 305.50 M300.5 452.50 L440.5 312.50 M300.5 459.50 L440.5 319.50 M300.5 466.50 L440.5 326.50 M300.5 473.50 L440.5 333.50 M300.5 480.50 L440.5 340.50 M300.5 487.50 L440.5 347.50 M300.5 494.50 L440.5 354.50 M300.5 501.50 L440.5 361.50 M300.5 508.50 L440.5 368.50 M300.5 515.50 L440.5 375.50 M300.5 522.50 L440.5 382.50 M300.5 529.50 L440.5 389.50 M300.5 536.50 L440.5 396.50 M300.5 543.50 L440.5 403.50 M300.5 550.50 L440.5 410.50 M300.5 557.50 L440.5 417.50 M300.5 564.50 L440.5 424.50 M300.5 571.50 L440.5 431.50 M300.5 578.50 L440.5 438.50 M300.5 585.50 L440.5 445.50 M300.5 592.50 L440.5 452.50 M300.5 599.50 L440.5 459.50 M300.5 606.50 L440.5 466.50 M300.5 613.50 L440.5 473.50 M300.5 620.50 L440.5 480.50 M300.5 627.50 L440.5 487.50 M300.5 634.50 L440.5 494.50 M300.5 641.50 L440.5 501.50 M300.5 648.50 L440.5 508.50 M300.5 655.50 L440.5 515.50 M300.5 662.50 L440.5 522.50 M300.5 669.50 L440.5 529.50 M300.5 676.50 L440.5 536.50 M300.5 683.50 L440.5 543.50 M300.5 690.50 L440.5 550.50 M300.5 697.50 L440.5 557.50 M300.5 704.50 L440.5 564.50 M300.5 711.50 L440.5 571.50 M300.5 718.50 L440.5 578.50 M300.5 725.50 L440.5 585.50 M300.5 732.50 L440.5 592.50 M300.5 739.50 L440.5 599.50 M300.5 746.50 L440.5 606.50 M300.5 753.50 L440.5 613.50 M300.5 760.50 L440.5 620.50 M300.5 767.50 L440.5 627.50 M300.5 774.50 L440.5 634.50 M300.5 781.50 L440.5 641.50 M300.5 788.50 L440.5 648.50 M300.5 795.50 L440.5 655.50 M300.5 802.50 L440.5 662.50 M300.5 809.50 L440.5 669.50 M300.5 816.50 L440.5 676.50 M300.5 823.50 L440.5 683.50 M300.5 830.50 L440.5 690.50 M300.5 837.50 L440.5 697.50 M300.5 844.50 L440.5 704.50 M300.5 851.50 L440.5 711.50 M300.5 858.50 L440.5 718.50 M300.5 865.50 L440.5 725.50 M300.5 872.50 L440.5 732.50 M300.5 879.50 L440.5 739.50 M300.5 886.50 L440.5 746.50 M300.5 893.50 L440.5 753.50 M300.5 900.50 L440.5 760.50 M300.5 907.50 L440.5 767.50 M300.5 914.50 L440.5 774.50 M300.5 921.50 L440.5 781.50 M300.5 928.50 L440.5 788.50 M300.5 935.50 L440.5 795.50 M300.5 942.50 L440.5 802.50 M300.5 949.50 L440.5 809.50 M300.5 956.50 L440.5 816.50 M300.5 963.50 L440.5 823.50 M300.5 970.50 L440.5 830.50 M300.5 977.50 L440.5 837.50 M300.5 984.50 L440.5 844.50 M300.5 991.50 L440.5 851.50 M300.5 998.50 L440.5 858.50 M300.5 1005.50 L440.5 865.50 M300.5 1012.50 L440.5 872.50 M300.5 1019.50 L440.5 879.50 M300.5 1026.50 L440.5 886.50 M300.5 1033.50 L440.5 893.50 M300.5 1040.50 L440.5 900.50 M300.5 1047.50 L440.5 907.50 M300.5 1054.50 L440.5 914.50 M300.5 1061.50 L440.5 921.50 M300.5 1068.50 L440.5 928.50 M300.5 1075.50 L440.5 935.50 M300.5 1082.50 L440.5 942.50 M300.5 1089.50 L440.5 949.50 M300.5 1096.50 L440.5 956.50 M300.5 1103.50 L440.5 963.50 M300.5 1110.50 L440.5 970.50 M300.5 1117.50 L440.5 977.50 M300.5 1124.50 L440.5 984.50 M300.5 1131.50 L440.5 991.50 M300.5 1138.50 L440.5 998.50 M300.5 1145.50 L440.5 1005.50 M300.5 1152.50 L440.5 1012.50 M300.5 1159.50 L440.5 1019.50 M300.5 1166.50 L440.5 1026.50 M300.5 1173.50 L440.5 1033.50" stroke="#0000ff" stroke-width="1" clip-path="url(#rclip)"/>
<g shape-rendering="crispEdges">
<rect x="341" y="226.2" width="16.8" height="39.30000000000001" fill="#000"/>
<rect x="382.1" y="226.2" width="15.7" height="39.30000000000001" fill="#000"/>
<rect x="341" y="437.5" width="16.8" height="39.30000000000001" fill="#000"/>
<rect x="382.1" y="437.5" width="15.7" height="39.30000000000001" fill="#000"/>
</g>
<g fill="none" stroke="#fff" stroke-width="1">
<path d="M341.7 176.5 L346.6 176.5 Q369.4 197.5 392.1 176.5 L397.7 176.5" stroke="#ffffff" fill="none" />
<path d="M341.7 184.5 Q369.4 206.3 397.8 184.5" stroke="#ffffff" fill="none" />
<path d="M342.9 178.6 Q369.4 202.2 396.9 178.6" stroke="#ff0000" stroke-dasharray="6 2"/>
<path d="M341.7 223.8 L341.7 176.5 M397.8 176.5 L397.8 265.5 L416 265.5 L421.7 271 L421.7 292 L417.5 296.4 L322.5 296.4 L318.4 292 L318.4 271 L323.5 265.5 L341.7 265.5 M341.7 265.5 L397.8 265.5" stroke="#ffffff" fill="none" />
<path d="M373.3 210.3 L385.5 210.3 L385.5 204.2 L397.8 204.2" stroke="#ffffff" fill="none" />
<path d="M344.4 226.2 L355.3 226.2 L357.8 228.7 L357.8 262.8 L355.3 265.3 L344.4 265.3 Z" stroke="#ffffff" fill="none" />
<path d="M394.7 226.2 L384.6 226.2 L382.1 228.7 L382.1 262.8 L384.6 265.3 L394.7 265.3 Z" stroke="#ffffff" fill="none" />
<path d="M341.7 526.5 L346.6 526.5 Q369.4 505.5 392.1 526.5 L397.7 526.5" stroke="#ffffff" fill="none" />
<path d="M341.7 518.5 Q369.4 496.7 397.8 518.5" stroke="#ffffff" fill="none" />
<path d="M342.9 524.4 Q369.4 500.8 396.9 524.4" stroke="#ff0000" stroke-dasharray="6 2"/>
<path d="M341.7 479.2 L341.7 526.5 M397.8 526.5 L397.8 437.5 L416 437.5 L421.7 432.0 L421.7 411.0 L417.5 406.6 L322.5 406.6 L318.4 411.0 L318.4 432.0 L323.5 437.5 L341.7 437.5 M341.7 437.5 L397.8 437.5" stroke="#ffffff" fill="none" />
<path d="M373.3 492.7 L385.5 492.7 L385.5 498.8 L397.8 498.8" stroke="#ffffff" fill="none" />
<path d="M344.4 476.8 L355.3 476.8 L357.8 474.3 L357.8 440.2 L355.3 437.7 L344.4 437.7 Z" stroke="#ffffff" fill="none" />
<path d="M394.7 476.8 L384.6 476.8 L382.1 474.3 L382.1 440.2 L384.6 437.7 L394.7 437.7 Z" stroke="#ffffff" fill="none" />
</g>
<g shape-rendering="crispEdges" stroke="#fff">
<line x1="318.5" y1="296.4" x2="318.5" y2="406.6" stroke="#ffffff" />
<line x1="421.5" y1="296.4" x2="421.5" y2="406.6" stroke="#ffffff" />
<line x1="322.5" y1="296.4" x2="322.5" y2="335.5" stroke="#ffffff" />
<line x1="322.5" y1="367.5" x2="322.5" y2="406.6" stroke="#ffffff" />
<line x1="416.5" y1="296.4" x2="416.5" y2="335.5" stroke="#ffffff" />
<line x1="416.5" y1="367.5" x2="416.5" y2="406.6" stroke="#ffffff" />
<line x1="318.5" y1="335.5" x2="421.5" y2="335.5" stroke="#ffffff" />
<line x1="318.5" y1="367.5" x2="421.5" y2="367.5" stroke="#ffffff" />
</g>
<g fill="#000" stroke="#ffffff" stroke-width="1">
<rect x="329.5" y="206.5" width="41" height="8"/>
<path d="M370.5 206.5 Q373.5 207.5 374 210.5 Q373.5 213.5 370.5 214.5"/>
<rect x="319.5" y="203.5" width="6" height="14" rx="1"/>
<rect x="325.5" y="206.5" width="4" height="8"/>
<path d="M320 207.5H325.5M320 213.5H325.5M329.5 208.5H366.5M329.5 212.5H366.5M366.5 206.5V214.5M369.5 206.5V214.5" fill="none"/>
<rect x="341.5" y="488.5" width="29" height="8"/>
<path d="M370.5 488.5 Q373.5 489.5 374 492.5 Q373.5 495.5 370.5 496.5"/>
<path d="M341.5 490.5H366.5M341.5 494.5H366.5M366.5 488.5V496.5M369.5 488.5V496.5" fill="none"/>
</g>
<line x1="341.7" y1="437.5" x2="341.7" y2="479.2" stroke="#ffffff" />
<line x1="315" y1="210.5" x2="373" y2="210.5" stroke="#ff0000" stroke-dasharray="8 3"/>
<line x1="341" y1="492.5" x2="373" y2="492.5" stroke="#ff0000" stroke-dasharray="8 3"/>
<g shape-rendering="crispEdges">
<line x1="369.5" y1="155" x2="369.5" y2="552" stroke="#ff0000" stroke-dasharray="20 3 5 3" stroke-dashoffset="29.9"/>
<line x1="311" y1="351.5" x2="423" y2="351.5" stroke="#ff0000" stroke-dasharray="20 3 5 3"/>
<line x1="242" y1="176.5" x2="341.7" y2="176.5" stroke="#00ffff" />
<line x1="260" y1="183.5" x2="341.7" y2="183.5" stroke="#00ffff" />
<line x1="245.5" y1="176.5" x2="245.5" y2="526" stroke="#00ffff" />
<line x1="263.5" y1="183.5" x2="263.5" y2="519.5" stroke="#00ffff" />
<line x1="242" y1="526.5" x2="341.9" y2="526.5" stroke="#00ffff" />
<line x1="259.5" y1="519.5" x2="341.9" y2="519.5" stroke="#00ffff" />
<line x1="283.7" y1="156.5" x2="309.5" y2="156.5" stroke="#00ffff" />
<line x1="309.5" y1="156.5" x2="309.5" y2="176.5" stroke="#00ffff" />
<line x1="341.7" y1="223.8" x2="341.7" y2="265.5" stroke="#00ffff" />
<line x1="320" y1="235.5" x2="369" y2="235.5" stroke="#00ffff" />
<line x1="314.2" y1="257.5" x2="369" y2="257.5" stroke="#00ffff" />
<line x1="368.5" y1="213.7" x2="368.5" y2="238.5" stroke="#00ffff" />
<line x1="407" y1="187.5" x2="426" y2="187.5" stroke="#00ffff" />
<line x1="407" y1="227.5" x2="426" y2="227.5" stroke="#00ffff" />
<line x1="411.3" y1="245.5" x2="430" y2="245.5" stroke="#00ffff" />
<line x1="291" y1="277.5" x2="311" y2="277.5" stroke="#00ffff" />
<line x1="425" y1="286.5" x2="450" y2="286.5" stroke="#00ffff" />
<line x1="369" y1="155.5" x2="466" y2="155.5" stroke="#00ffff" />
<line x1="465.5" y1="155.5" x2="465.5" y2="351" stroke="#00ffff" />
<line x1="461" y1="351.5" x2="469" y2="351.5" stroke="#00ffff" />
<line x1="455.5" y1="295.6" x2="455.5" y2="406" stroke="#00ffff" />
<line x1="416.3" y1="295.5" x2="459.3" y2="295.5" stroke="#00ffff" />
<line x1="416.3" y1="406.5" x2="459.3" y2="406.5" stroke="#00ffff" />
<line x1="421" y1="335.5" x2="444" y2="335.5" stroke="#00ffff" />
<line x1="421" y1="367.5" x2="444" y2="367.5" stroke="#00ffff" />
<line x1="440.5" y1="335.5" x2="440.5" y2="510" stroke="#00ffff" />
<line x1="440.5" y1="510.5" x2="456.1" y2="510.5" stroke="#00ffff" />
<line x1="318.5" y1="406.6" x2="318.5" y2="631" stroke="#00ffff" />
<line x1="421.5" y1="406.5" x2="421.5" y2="631" stroke="#00ffff" />
<line x1="318.5" y1="629.5" x2="421.5" y2="629.5" stroke="#00ffff" />
<line x1="341.5" y1="526" x2="341.5" y2="607" stroke="#00ffff" />
<line x1="397.5" y1="526" x2="397.5" y2="607" stroke="#00ffff" />
<line x1="341.5" y1="604.5" x2="397.5" y2="604.5" stroke="#00ffff" />
<line x1="291" y1="415.5" x2="315.8" y2="415.5" stroke="#00ffff" />
<line x1="279.7" y1="506.5" x2="313" y2="506.5" stroke="#00ffff" />
<line x1="397.5" y1="482.5" x2="419.6" y2="482.5" stroke="#00ffff" />
<line x1="402" y1="510.5" x2="414.7" y2="510.5" stroke="#00ffff" />
<line x1="421.5" y1="551.5" x2="445.7" y2="551.5" stroke="#00ffff" />
<line x1="259.5" y1="519.5" x2="259.5" y2="519.5" stroke="#00ffff" />
</g>
<line x1="335" y1="147" x2="323.6" y2="204" stroke="#00ffff" />
<line x1="391.9" y1="198" x2="407" y2="187.5" stroke="#00ffff" />
<line x1="358.1" y1="213.2" x2="407" y2="227.5" stroke="#00ffff" />
<line x1="395.2" y1="278.1" x2="411.3" y2="245.5" stroke="#00ffff" />
<line x1="311" y1="277.5" x2="322" y2="265.5" stroke="#00ffff" />
<line x1="425" y1="286.5" x2="416.2" y2="296.5" stroke="#00ffff" />
<line x1="315.8" y1="415.5" x2="319" y2="410.4" stroke="#00ffff" />
<line x1="313" y1="506.5" x2="344.3" y2="477.2" stroke="#00ffff" />
<line x1="397.5" y1="482.5" x2="394.3" y2="476.3" stroke="#00ffff" />
<line x1="400.5" y1="511" x2="369.7" y2="546.9" stroke="#00ffff" />
<line x1="350.4" y1="525.2" x2="372.6" y2="550.4" stroke="#00ffff" />
<text x="415.5" y="185" fill="#00ff00" font-size="11" text-anchor="middle" >1</text>
<text x="415.5" y="225" fill="#00ff00" font-size="11" text-anchor="middle" >2</text>
<text x="419.5" y="242" fill="#00ff00" font-size="11" text-anchor="middle" >3</text>
<g shape-rendering="crispEdges">
<rect x="323.5" y="227.5" width="6" height="6" stroke="#00ff00" fill="none" />
<rect x="317.5" y="249.5" width="6" height="5" stroke="#00ff00" fill="none" />
<rect x="458.5" y="234.5" width="5" height="38" stroke="#00ff00" fill="none" />
<rect x="432.5" y="339.5" width="5" height="24" stroke="#00ff00" fill="none" />
<rect x="367.5" y="596.5" width="6" height="5" stroke="#00ff00" fill="none" />
<rect x="367.5" y="621.5" width="6" height="5" stroke="#00ff00" fill="none" />
<rect x="402.5" y="502.5" width="12" height="6" stroke="#00ff00" fill="none" />
<rect x="252.5" y="153.5" width="18" height="6" stroke="#00ff00" fill="none" />
<rect x="276.5" y="153.5" width="4" height="6" stroke="#00ff00" fill="none" />
<rect x="238.5" y="151.5" width="45" height="10" stroke="#ffbf7f" fill="none" />
<line x1="249.5" y1="151.5" x2="249.5" y2="161.5" stroke="#ffbf7f" />
<line x1="273.5" y1="151.5" x2="273.5" y2="161.5" stroke="#ffbf7f" />
<rect x="456.5" y="505.5" width="72" height="11" stroke="#ffbf7f" fill="none" />
<line x1="467.5" y1="505.5" x2="467.5" y2="516.5" stroke="#ffbf7f" />
<line x1="504.5" y1="505.5" x2="504.5" y2="516.5" stroke="#ffbf7f" />
<rect x="445.5" y="545.5" width="41" height="11" stroke="#ffbf7f" fill="none" />
<line x1="457.5" y1="545.5" x2="457.5" y2="556.5" stroke="#ffbf7f" />
<line x1="476.5" y1="545.5" x2="476.5" y2="556.5" stroke="#ffbf7f" />
<rect x="470.5" y="507.5" width="18" height="6" stroke="#00ff00" fill="none" />
<rect x="507.5" y="507.5" width="4" height="6" stroke="#00ff00" fill="none" />
<rect x="460.5" y="548.5" width="13" height="5" stroke="#00ff00" fill="none" />
<rect x="479.5" y="548.5" width="4" height="5" stroke="#00ff00" fill="none" />
<line x1="459" y1="508.5" x2="465" y2="508.5" stroke="#ffbf7f" />
<line x1="459" y1="511.5" x2="465" y2="511.5" stroke="#ffbf7f" />
<line x1="459" y1="514.5" x2="465" y2="514.5" stroke="#ffbf7f" />
<line x1="449.5" y1="547.5" x2="449.5" y2="554.5" stroke="#ffbf7f" />
</g>
<g fill="none" stroke="#ffbf7f"><circle cx="497.4" cy="511" r="3.5"/><circle cx="519.3" cy="511" r="3.5"/><line x1="497.4" y1="506" x2="497.4" y2="516"/><line x1="519.3" y1="506" x2="519.3" y2="516"/>
<circle cx="455.5" cy="419" r="5"/></g><rect x="453.5" y="416.5" width="4" height="6" fill="none" stroke="#00ff00"/>
<line x1="450" y1="408.5" x2="462" y2="408.5" stroke="#ffffff" />
<line x1="455.5" y1="408.5" x2="455.5" y2="414" stroke="#00ffff" />
<text x="0" y="0" transform="translate(291 276) scale(0.75 1)" fill="#00ffff" font-size="10">3x45°</text>
<text x="0" y="0" transform="translate(425 285) scale(0.75 1)" fill="#00ffff" font-size="10">3X45°</text>
<text x="0" y="0" transform="translate(291.5 414) scale(0.75 1)" fill="#00ffff" font-size="10">3X45°</text>
<text x="0" y="0" transform="translate(287 501) scale(0.75 1)" fill="#00ffff" font-size="10">2X45°</text>
<text x="0" y="0" transform="translate(401 480.5) scale(0.75 1)" fill="#00ffff" font-size="10">2X45°</text>
<g shape-rendering="crispEdges">
<line x1="239" y1="334.5" x2="244" y2="334.5" stroke="#00ff00" />
<line x1="257" y1="334.5" x2="262" y2="334.5" stroke="#00ff00" />
<line x1="239" y1="337.5" x2="244" y2="337.5" stroke="#00ff00" />
<line x1="257" y1="337.5" x2="262" y2="337.5" stroke="#00ff00" />
<line x1="239" y1="340.5" x2="244" y2="340.5" stroke="#00ff00" />
<line x1="257" y1="340.5" x2="262" y2="340.5" stroke="#00ff00" />
<line x1="242" y1="342.5" x2="244" y2="342.5" stroke="#00ff00" />
<line x1="260" y1="342.5" x2="262" y2="342.5" stroke="#00ff00" />
<line x1="239" y1="345.5" x2="244" y2="345.5" stroke="#00ff00" />
<line x1="257" y1="345.5" x2="262" y2="345.5" stroke="#00ff00" />
<line x1="234" y1="345.5" x2="238" y2="345.5" stroke="#00ff00" />
<line x1="252" y1="345.5" x2="256" y2="345.5" stroke="#00ff00" />
<line x1="241" y1="349.5" x2="244" y2="349.5" stroke="#00ff00" />
<line x1="259" y1="349.5" x2="262" y2="349.5" stroke="#00ff00" />
<line x1="237" y1="352.5" x2="244" y2="352.5" stroke="#00ff00" />
<line x1="255" y1="352.5" x2="262" y2="352.5" stroke="#00ff00" />
<line x1="242" y1="354.5" x2="244" y2="354.5" stroke="#00ff00" />
<line x1="260" y1="354.5" x2="262" y2="354.5" stroke="#00ff00" />
<line x1="237" y1="359.5" x2="244" y2="359.5" stroke="#00ff00" />
<line x1="255" y1="359.5" x2="262" y2="359.5" stroke="#00ff00" />
<line x1="237" y1="363.5" x2="244" y2="363.5" stroke="#00ff00" />
<line x1="255" y1="363.5" x2="262" y2="363.5" stroke="#00ff00" />
<line x1="237" y1="367.5" x2="244" y2="367.5" stroke="#00ff00" />
<line x1="255" y1="367.5" x2="262" y2="367.5" stroke="#00ff00" />
<line x1="237" y1="371.5" x2="244" y2="371.5" stroke="#00ff00" />
<line x1="255" y1="371.5" x2="262" y2="371.5" stroke="#00ff00" />
<line x1="444" y1="338.5" x2="449" y2="338.5" stroke="#00ff00" />
<line x1="444" y1="341.5" x2="449" y2="341.5" stroke="#00ff00" />
<line x1="444" y1="345.5" x2="449" y2="345.5" stroke="#00ff00" />
<line x1="449" y1="345.5" x2="454" y2="345.5" stroke="#00ff00" />
<line x1="444" y1="349.5" x2="449" y2="349.5" stroke="#00ff00" />
<line x1="447" y1="353.5" x2="454" y2="353.5" stroke="#00ff00" />
<line x1="452" y1="355.5" x2="454" y2="355.5" stroke="#00ff00" />
<line x1="447" y1="359.5" x2="454" y2="359.5" stroke="#00ff00" />
<line x1="447" y1="363.5" x2="454" y2="363.5" stroke="#00ff00" />
<line x1="448" y1="367.5" x2="454" y2="367.5" stroke="#00ff00" />
</g>
<path d="M350.4 171.3 L349.4 179.4 L359 176.3 Z M359 176.3 L365.8 173.3" stroke="#ffbf7f" fill="none" />
<path d="M355.4 165.2 L362.8 171.5 L360 175.3 L352.4 169.5 Z" stroke="#00ff00" fill="none" />
<path d="M395.7 163.7 L393.4 171.3 L401.5 171.3 Z M395.7 163.7 L391.4 157.1" stroke="#ffbf7f" fill="none" />
<path d="M390.4 159.1 L395.4 162.1 L392.1 169.5 L386.3 167 Z" stroke="#00ff00" fill="none" />
<path d="M389.3 323.7 L416.3 296.4 M397 315.3 L405.3 317.8 M397 315.3 L401.9 332.2" stroke="#ffbf7f" fill="none" />
<path d="M410.4 315.3 L414.6 320 L404.5 328.8 L401 323.7 Z" stroke="#00ff00" fill="none" />
<path d="M333.5 399.5 L341.5 399.5 L337.3 406 Z M341.5 399.5 L345.8 391.2" stroke="#ffbf7f" fill="none" />
<rect x="334.5" y="391.5" width="8" height="6" stroke="#00ff00" fill="none" />
<path d="M318.6 428.4 L311.4 424.5 L311.4 432.8 Z M311.4 424.5 L303.2 420.3" stroke="#ffbf7f" fill="none" />
<rect x="303.5" y="423.5" width="5" height="10" stroke="#00ff00" fill="none" />
<path d="M421.4 424.4 L428.4 420.3 L428.4 427.9 Z M428.4 427.9 L436.5 432.5" stroke="#ffbf7f" fill="none" />
<rect x="430.5" y="418.5" width="6" height="9" stroke="#00ff00" fill="none" />
<path d="M330.4 469.2 L333.5 480.2 L326.4 484.4 L334.4 486.2 Z" stroke="#ffbf7f" fill="none" />
<path d="M328.4 471.2 L332.6 475.5 L322.5 484.5 L318.3 480.4 Z" stroke="#00ff00" fill="none" />
<path d="M288.4 527 L284 533.3 L293 533.3 L288.4 527 L279.3 541.4" stroke="#ffbf7f" fill="none" />
<rect x="284.25" y="535.4" width="9.5" height="6" fill="none" stroke="#00ff00" transform="rotate(0 289 538.4)"/>
<path d="M364.5 524.1 L376.7 537.6 L372.6 541.4 L360.2 528.4 Z" stroke="#00ff00" fill="none" />
<g shape-rendering="crispEdges">
</g>
</svg></div>
<div id="laybar"></div>
<div id="graybar"></div>
<div id="cmd"></div>
<div class="a" style="left:826px;top:44px;width:20px;overflow:hidden;font-size:12px;color:#111">粗实</div>
<div class="a" style="left:914.5px;top:45px;font-size:12.3px;color:#111;transform:scaleX(0.91);transform-origin:0 0">ByLayer</div>
<div class="a" style="left:808.5px;top:75px;font-size:12.3px;color:#111;transform:scaleX(0.91);transform-origin:0 0">ByLayer</div>
<div class="a" style="left:964.5px;top:75px;width:36px;overflow:hidden;font-size:12.3px;color:#111;transform:scaleX(0.91);transform-origin:0 0">ByLayer</div>
<svg class="a" style="left:452px;top:4px" width="18" height="18" viewBox="0 0 18 18">
<path d="M9 3.5a4 4 0 0 0-2.5 7.2V13h5v-2.3A4 4 0 0 0 9 3.5z" fill="none" stroke="#c9d3e3" stroke-width="1.1"/>
<path d="M7 14.5h4" stroke="#c9d3e3" stroke-width="1.1"/>
</svg>
<svg class="a" style="left:0;top:124px" width="1383" height="23" viewBox="0 124 1383 23">
<rect x="0" y="124" width="1383" height="23" fill="#e6e6e6"/>
<path d="M0 124.5H1383" stroke="#d4d4d4"/>
<g fill="#eeeeee" stroke="#c2c2c2" stroke-width="1">
<path d="M25.8 147.5L45.3 127.5H176L178.5 130V147.5"/>
<path d="M179 147.5V130L181.5 127.5H327.5L330 130V147.5"/>
<path d="M330.5 147.5V130L333 127.5H464L466.5 130V147.5"/>
<path d="M467 147.5V130L469.5 127.5H575L577 130V147.5"/>
</g>
<path d="M560.7 147.5L579.8 127.5H673.5L676 130V147.5" fill="#fff" stroke="#c2c2c2"/>
<path d="M663.5 134.5L670 141M670 134.5L663.5 141" stroke="#555" stroke-width="1.3"/>
</svg>
<div class="dt" style="left:60px">第二级行星架.dwg</div>
<div class="dt" style="left:198px">第一级太阳轮轴.dwg</div>
<div class="dt" style="left:347px">第一级行星架.dwg</div>
<div class="dt" style="left:484px">太阳轮轴.dwg</div>
<div class="dt" style="left:594px;font-weight:bold;color:#333">涡轮.dwg</div>
<!-- sidebar -->
<div class="a" style="left:0;top:132px;width:1px;height:42px;background:#cfcfcf"></div>
<svg class="a" style="left:4px;top:131px" width="18" height="45" viewBox="0 0 18 45">
<rect x="1" y="1" width="15" height="16" fill="#ecebdc"/>
<path d="M2 9V7Q2 4 6 4H8" fill="none" stroke="#222" stroke-width="1.3"/>
<path d="M7.5 1.5L11 4L7.5 6.5Z" fill="#222"/>
<path d="M10.5 3H16.5M13.5 3V9" stroke="#333" stroke-width="1.6"/>
<rect x="1.5" y="11" width="13.5" height="4.5" rx="1.5" fill="#fff" stroke="#333" stroke-width="1.3"/>
<path d="M4 13.2H11" stroke="#666" stroke-width="0.8"/>
</svg>
<div class="a" style="left:6px;top:150px;font-size:12px;color:#222;line-height:12px">图</div>
<div class="a" style="left:6px;top:162px;font-size:12px;color:#222;line-height:12px">册</div>
<!-- layout tabs -->
<svg class="a" style="left:25px;top:788px" width="300" height="16" viewBox="25 788 300 16">
<g fill="#666">
<path d="M29 792.5V801.5" stroke="#666" stroke-width="1"/><path d="M34 792.5L30 797L34 801.5Z"/>
<path d="M49 792.5L45 797L49 801.5Z"/>
<path d="M63 792.5L67 797L63 801.5Z"/>
<path d="M77 792.5L81 797L77 801.5Z"/><path d="M82.5 792.5V801.5" stroke="#666" stroke-width="1"/>
</g>
<path d="M90.4 788L97.7 803.5H130L137.7 788" fill="#fff" stroke="#9a9a9a"/>
<path d="M133.6 794L138.8 803.5H178.2L185.7 788M181 794L186.9 803.5H225.6L233.7 788" fill="none" stroke="#9a9a9a"/>
</svg>
<div class="a" style="left:99px;top:788px;font-size:13px;font-weight:bold;color:#333">模型</div>
<div class="a" style="left:142px;top:788px;font-size:13px;color:#444">布局1</div>
<div class="a" style="left:190px;top:788px;font-size:13px;color:#444">布局2</div>

<div class="a" style="left:29px;top:814px;font-size:13px;color:#333">命令行</div>
</body></html>
